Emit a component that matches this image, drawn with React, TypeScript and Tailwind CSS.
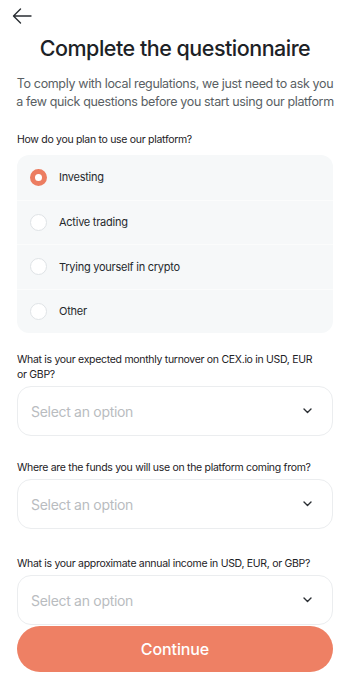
import { useState } from "react";

const FONT = { fontFamily: "Inter, 'Noto Sans', sans-serif" };

const PLANS = ["Investing", "Active trading", "Trying yourself in crypto", "Other"];

const QUESTIONS = [
  { text: "What is your expected monthly turnover on CEX.io in USD, EUR or GBP?", gap: "mt-[19px]" },
  { text: "Where are the funds you will use on the platform coming from?", gap: "mt-[24px]" },
  { text: "What is your approximate annual income in USD, EUR, or GBP?", gap: "mt-[27px]" },
];

function Radio({ checked }: { checked: boolean }) {
  return checked ? (
    <span className="w-[17px] h-[17px] rounded-full border-[5px] border-[#ec7d61] bg-white shrink-0" />
  ) : (
    <span className="w-[17px] h-[17px] rounded-full border border-[#dfe3e6] bg-white shrink-0" />
  );
}

function SelectBox() {
  return (
    <button className="w-full h-[50px] rounded-[14px] border border-[#ebedef] bg-white flex items-center justify-between pl-[13px] pr-[20px]">
      <span className="text-[14px] text-[#b9bcbf] tracking-[-0.3px]">Select an option</span>
      <svg width="9" height="6" viewBox="0 0 9 6" fill="none">
        <path d="M1 1l3.5 3.5L8 1" stroke="#2a2e33" strokeWidth="1.4" strokeLinecap="round" strokeLinejoin="round" />
      </svg>
    </button>
  );
}

export default function App() {
  const [plan, setPlan] = useState(0);

  return (
    <div className="relative w-[350px] h-[699px] bg-white overflow-hidden text-[#1d2125]" style={FONT}>
      <div className="px-[17px]">
        {/* Back */}
        <div className="h-[30px] flex items-center -ml-[6px] pt-[1px]">
          <svg width="22" height="18" viewBox="0 0 22 18" fill="none">
            <path d="M20 9H3M9.5 2L2.5 9l7 7" stroke="#2a2e33" strokeWidth="1.4" strokeLinecap="round" strokeLinejoin="round" />
          </svg>
        </div>

        <h1 className="mt-[3px] text-center text-[21.5px] leading-[30px] font-medium tracking-[-0.5px] text-[#1d2226]">
          Complete the questionnaire
        </h1>

        <p className="mt-[12px] -mx-[4px] text-center text-[12.5px] leading-[18px] text-[#5a5f64] tracking-[-0.35px]">
          To comply with local regulations, we just need to ask you
          <br />
          a few quick questions before you start using our platform
        </p>

        <div className="mt-[21px] text-[10.5px] leading-[16px] tracking-[-0.3px]">How do you plan to use our platform?</div>

        <div className="mt-[7px] rounded-[12px] bg-[#f6f8f9] overflow-hidden">
          {PLANS.map((p, i) => (
            <div
              key={p}
              onClick={() => setPlan(i)}
              className={`h-[44.5px] flex items-center gap-[12px] pl-[13px] cursor-pointer ${i > 0 ? "border-t border-[#fbfcfc]" : ""}`}
            >
              <Radio checked={plan === i} />
              <span className="text-[11px] tracking-[-0.25px] text-[#25292d]">{p}</span>
            </div>
          ))}
        </div>

        {QUESTIONS.map((q) => (
          <div key={q.text} className={q.gap}>
            <div className="text-[10.5px] leading-[15px] tracking-[-0.3px] pr-[14px]">{q.text}</div>
            <div className="mt-[4px]">
              <SelectBox />
            </div>
          </div>
        ))}
      </div>

      {/* Sticky action */}
      <div className="absolute left-[17px] right-[17px] top-[626px]">
        <button className="w-full h-[46px] rounded-full bg-[#ee8064] text-white text-[16px] font-medium tracking-[-0.1px]">
          Continue
        </button>
      </div>
    </div>
  );
}
